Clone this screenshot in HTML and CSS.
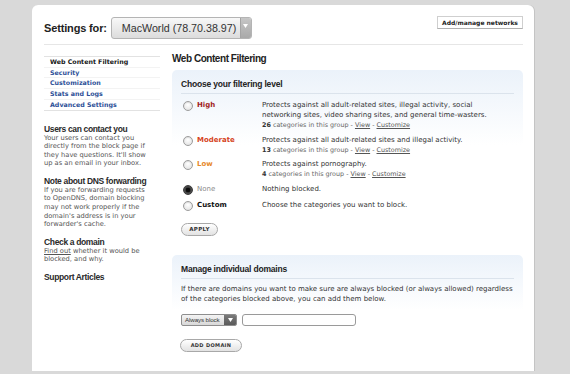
FILE: index.html
```html
<!DOCTYPE html>
<html lang="en">
<head>
<meta charset="utf-8">
<title>Settings for MacWorld</title>
<link rel="stylesheet" href="styles.css">
</head>
<body>
<div class="page">
  <div class="panel">
    <header class="top">
      <div class="site">
        <h1 class="site-title">Settings for:</h1>
        <div class="netsel">
          <span class="netsel-text">MacWorld (78.70.38.97)</span>
          <span class="netsel-arrow"><svg width="5" height="4" viewBox="0 0 5 4"><path d="M0 0H5L2.5 4Z" fill="#fff"/></svg></span>
        </div>
      </div>
      <button class="btn-manage">Add/manage networks</button>
    </header>
    <div class="cols">
      <aside class="side">
        <ul class="nav">
          <li class="current">Web Content Filtering</li>
          <li>Security</li>
          <li>Customization</li>
          <li>Stats and Logs</li>
          <li>Advanced Settings</li>
        </ul>
        <div class="tips">
          <section class="tip">
            <h3>Users can contact you</h3>
            <p>Your users can contact you<br>directly from the block page if<br>they have questions. It'll show<br>up as an email in your inbox.</p>
          </section>
          <section class="tip">
            <h3>Note about DNS forwarding</h3>
            <p>If you are forwarding requests<br>to OpenDNS, domain blocking<br>may not work properly if the<br>domain's address is in your<br>forwarder's cache.</p>
          </section>
          <section class="tip">
            <h3>Check a domain</h3>
            <p><u>Find out</u> whether it would be<br>blocked, and why.</p>
          </section>
          <section class="tip">
            <h3>Support Articles</h3>
          </section>
        </div>
      </aside>
      <main class="main">
        <h2 class="main-title">Web Content Filtering</h2>
        <section class="box">
          <h3 class="box-title">Choose your filtering level</h3>
          <div class="levels">
            <div class="level">
              <span class="radio"></span>
              <span class="lvl-name high">High</span>
              <div class="lvl-desc">
                <p>Protects against all adult-related sites, illegal activity, social<br>networking sites, video sharing sites, and general time-wasters.</p>
                <p class="cats"><b>26</b> categories in this group - <u>View</u> - <u>Customize</u></p>
              </div>
            </div>
            <div class="level">
              <span class="radio"></span>
              <span class="lvl-name moderate">Moderate</span>
              <div class="lvl-desc">
                <p>Protects against all adult-related sites and illegal activity.</p>
                <p class="cats"><b>13</b> categories in this group - <u>View</u> - <u>Customize</u></p>
              </div>
            </div>
            <div class="level">
              <span class="radio"></span>
              <span class="lvl-name low">Low</span>
              <div class="lvl-desc">
                <p>Protects against pornography.</p>
                <p class="cats"><b>4</b> categories in this group - <u>View</u> - <u>Customize</u></p>
              </div>
            </div>
            <div class="level">
              <span class="radio on"></span>
              <span class="lvl-name none">None</span>
              <div class="lvl-desc">
                <p>Nothing blocked.</p>
              </div>
            </div>
            <div class="level">
              <span class="radio"></span>
              <span class="lvl-name custom">Custom</span>
              <div class="lvl-desc">
                <p>Choose the categories you want to block.</p>
              </div>
            </div>
          </div>
          <button class="pill apply">APPLY</button>
        </section>
        <section class="box box-domains">
          <h3 class="box-title">Manage individual domains</h3>
          <p class="box-text">If there are domains you want to make sure are always blocked (or always allowed) regardless<br>of the categories blocked above, you can add them below.</p>
          <div class="domain-form">
            <div class="minisel">
              <span class="minisel-text">Always block</span>
              <span class="minisel-arrow"><svg width="5" height="4" viewBox="0 0 5 4"><path d="M0 0H5L2.5 4Z" fill="#fff"/></svg></span>
            </div>
            <input class="domain-input" type="text">
          </div>
          <button class="pill add">ADD DOMAIN</button>
        </section>
      </main>
    </div>
  </div>
</div>
</body>
</html>
```
FILE: styles.css
```css
html, body {
  margin: 0;
  padding: 0;
}
body {
  background: #d9d9d9;
  width: 570px;
  height: 374px;
  overflow: hidden;
  font-family: "DejaVu Sans", Verdana, sans-serif;
  color: #333;
}
.page {
  padding: 5px 0 0 32px;
}
.panel {
  width: 502px;
  height: 366px;
  box-sizing: border-box;
  background: #fff;
  border-radius: 6px 6px 0 0;
  box-shadow: 1px 0 0 #c4c4c4;
  padding: 0 11px 0 12px;
}

/* header */
.top {
  display: flex;
  justify-content: space-between;
  align-items: flex-start;
  height: 40px;
  box-sizing: border-box;
  padding-top: 11px;
  border-bottom: 1px solid #e6e6e6;
}
.site {
  display: flex;
  align-items: center;
  gap: 4px;
  margin-top: 1px;
}
.site-title {
  margin: 0;
  font: bold 11px "Liberation Sans", Arial, sans-serif;
  letter-spacing: -0.15px;
  color: #222;
}
.netsel {
  display: flex;
  width: 141px;
  height: 22px;
  box-sizing: border-box;
  border: 1px solid #b4b4b4;
  border-radius: 3px;
  background: linear-gradient(#f8f8f8, #dcdcdc);
  overflow: hidden;
}
.netsel-text {
  flex: 1;
  padding-left: 10px;
  font: 10.7px/20px "Liberation Sans", Arial, sans-serif;
  color: #333;
  white-space: nowrap;
}
.netsel-arrow {
  width: 11px;
  display: flex;
  align-items: center;
  justify-content: center;
  padding-bottom: 5px;
  box-sizing: border-box;
  background: linear-gradient(#c6c6c6, #a9a9a9);
  border-left: 1px solid #a4a4a4;
}
.btn-manage {
  width: 86px;
  height: 13px;
  padding: 0;
  box-sizing: border-box;
  background: #fff;
  border: 1px solid #cfcfcf;
  border-bottom-color: #b0b0b0;
  font: bold 6px/11px "DejaVu Sans", Verdana, sans-serif;
  color: #222;
}

/* columns */
.cols {
  display: flex;
  gap: 12px;
}
.side {
  width: 116px;
  padding-top: 11px;
}
.nav {
  list-style: none;
  margin: 0;
  padding: 0;
  border-top: 1px solid #e2e2e2;
}
.nav li {
  padding-left: 6px;
  font: bold 6.3px/9.7px "DejaVu Sans", Verdana, sans-serif;
  color: #2d4f97;
  border-bottom: 1px solid #f3f3f3;
  white-space: nowrap;
}
.nav li:last-child {
  border-bottom-color: #e2e2e2;
}
.nav li.current {
  color: #151515;
}
.tips {
  display: flex;
  flex-direction: column;
  gap: 8px;
  margin-top: 13px;
}
.tip h3 {
  margin: 0;
  font: bold 8.5px/10px "Liberation Sans", Arial, sans-serif;
  letter-spacing: -0.35px;
  color: #2a2a2a;
}
.tip p {
  margin: 0;
  font-size: 6.7px;
  line-height: 8.6px;
  color: #555;
  white-space: nowrap;
}

/* main */
.main {
  width: 351px;
  padding-top: 8px;
}
.main-title {
  margin: 0 0 5px;
  font: bold 10px/12px "Liberation Sans", Arial, sans-serif;
  letter-spacing: -0.45px;
  color: #222;
}
.box {
  border-radius: 5px;
  padding: 9px;
  background: linear-gradient(#ebf2fa, #ffffff 75px);
}
.box-title {
  margin: 0;
  padding-bottom: 4px;
  border-bottom: 1px solid #dbe3ec;
  font: bold 8.5px/10px "Liberation Sans", Arial, sans-serif;
  letter-spacing: -0.2px;
  color: #222;
}
.levels {
  display: flex;
  flex-direction: column;
  gap: 4px;
  margin-top: 6px;
}
.level {
  display: grid;
  grid-template-columns: 10px 61px auto;
  column-gap: 4px;
  padding-left: 2px;
  min-height: 12px;
}
.radio {
  width: 10px;
  height: 10px;
  box-sizing: border-box;
  margin-top: 1px;
  border-radius: 50%;
  border: 1px solid #9c9c9c;
  background: radial-gradient(circle at 50% 35%, #ffffff, #dedede);
  box-shadow: inset 0 1px 1px rgba(0, 0, 0, 0.08);
}
.radio.on {
  border-color: #3a3a3a;
  background: radial-gradient(circle, #0c0c0c 0 2px, #3c3c3c 2.6px, #707070 100%);
}
.lvl-name {
  font: bold 7px/10px "DejaVu Sans", Verdana, sans-serif;
}
.lvl-name.high { color: #a11d1d; }
.lvl-name.moderate { color: #d6441c; }
.lvl-name.low { color: #e78a2c; }
.lvl-name.none { color: #8c8c8c; font-weight: normal; }
.lvl-name.custom { color: #111; }
.lvl-desc p {
  margin: 0;
  font-size: 7px;
  line-height: 10px;
  color: #333;
  white-space: nowrap;
}
.lvl-desc p.cats {
  font-size: 6.4px;
  line-height: 10.5px;
  color: #666;
}
.cats b {
  color: #333;
}
.cats u {
  color: #555;
}
.pill {
  display: block;
  height: 13px;
  padding: 0;
  box-sizing: border-box;
  border: 1px solid #a8a8a8;
  border-radius: 7px;
  background: linear-gradient(#ffffff, #e2e2e2);
  font: bold 5.5px/11px "DejaVu Sans", Verdana, sans-serif;
  letter-spacing: 0.3px;
  color: #333;
}
.apply {
  width: 37px;
  margin-top: 11.5px;
}
.box-domains {
  margin-top: 10px;
  background: linear-gradient(#ebf2fa, #ffffff 55px);
}
.box-text {
  margin: 5px 0 0;
  font-size: 7px;
  line-height: 10px;
  color: #333;
  white-space: nowrap;
}
.domain-form {
  display: flex;
  gap: 5px;
  margin-top: 10px;
}
.minisel {
  display: flex;
  width: 56px;
  height: 12px;
  box-sizing: border-box;
  border: 1px solid #8e8e8e;
  border-radius: 2px;
  background: linear-gradient(#f4f4f4, #d8d8d8);
  overflow: hidden;
}
.minisel-text {
  flex: 1;
  padding-left: 3px;
  font: 6.2px/10px "Liberation Sans", Arial, sans-serif;
  letter-spacing: -0.1px;
  color: #333;
  white-space: nowrap;
}
.minisel-arrow {
  width: 12px;
  flex: none;
  display: flex;
  align-items: center;
  justify-content: center;
  background: linear-gradient(#7a7a7a, #5a5a5a);
}
.domain-input {
  width: 114px;
  height: 12px;
  box-sizing: border-box;
  margin: 0;
  padding: 0 2px;
  border: 1px solid #9a9a9a;
  border-radius: 3px;
  background: #fff;
}
.add {
  width: 62px;
  margin: 13px 0 0 -1px;
  font-size: 5px;
  letter-spacing: 0.35px;
}
```
